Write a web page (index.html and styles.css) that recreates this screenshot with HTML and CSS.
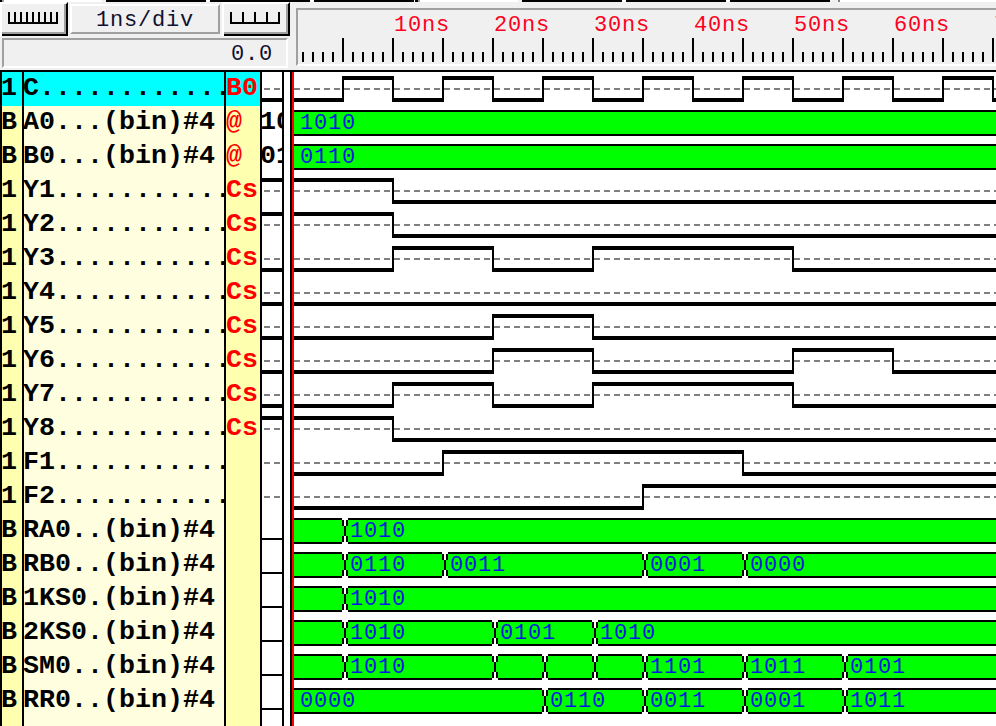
FILE: index.html
```html
<!DOCTYPE html>
<html lang="en">
<head>
<meta charset="utf-8">
<title>Waveforms</title>
<link rel="stylesheet" href="styles.css">
</head>
<body>
<svg class="defs" width="0" height="0" aria-hidden="true">
  <symbol id="cross" viewBox="0 0 6 26">
    <path fill="#fff" d="M0 0h6v2H0zM2 2h2v6H2zM2 18h2v6H2zM0 24h6v2H0z"/>
    <path fill="#000" d="M0 2h2v6H0zM4 2h2v6H4zM2 8h2v10H2zM0 18h2v6H0zM4 18h2v6H4z"/>
  </symbol>
</svg>
<div class="app">
  <div class="strip"></div>
  <header class="header">
    <div class="controls">
      <div class="buttons">
        <div class="btn"><svg width="50" height="12"><path d="M0 0h2v10h4V0h2v10h4V0h2v10h4V0h2v10h4V0h2v10h4V0h2v10h4V0h2v10h4V0h2v10h4V0h2v12H0z"/></svg></div>
        <div class="scale">1ns/div</div>
        <div class="btn"><svg width="50" height="12"><path d="M0 0h2v10h10V0h2v10h10V0h2v10h10V0h2v10h10V0h2v12H0z"/></svg></div>
      </div>
      <div class="position">0.0</div>
    </div>
    <div class="ruler">
      <div class="labels"><span>10ns</span><span>20ns</span><span>30ns</span><span>40ns</span><span>50ns</span><span>60ns</span><span>70ns</span></div>
      <div class="ticks"></div>
    </div>
  </header>
  <main class="signals">
    <div class="row selected"><b class="type">1</b><b class="name">C............</b><b class="src">B0</b><b class="val wave"><i class="lo"></i></b><div class="track wave"><i class="lo first n5"></i><i class="hi n5"></i><i class="lo n5"></i><i class="hi n5"></i><i class="lo n5"></i><i class="hi n5"></i><i class="lo n5"></i><i class="hi n5"></i><i class="lo n5"></i><i class="hi n5"></i><i class="lo n5"></i><i class="hi n5"></i><i class="lo n5"></i><i class="hi n5"></i><i class="lo rest"></i></div></div>
    <div class="row"><b class="type">B</b><b class="name">A0...(bin)#4</b><b class="src">@</b><b class="val">10</b><div class="track bus"><span class="rest first">1010</span></div></div>
    <div class="row"><b class="type">B</b><b class="name">B0...(bin)#4</b><b class="src">@</b><b class="val">01</b><div class="track bus"><span class="rest first">0110</span></div></div>
    <div class="row"><b class="type">1</b><b class="name">Y1...........</b><b class="src">Cs</b><b class="val wave"><i class="hi"></i></b><div class="track wave"><i class="hi first n10"></i><i class="lo rest"></i></div></div>
    <div class="row"><b class="type">1</b><b class="name">Y2...........</b><b class="src">Cs</b><b class="val wave"><i class="hi"></i></b><div class="track wave"><i class="hi first n10"></i><i class="lo rest"></i></div></div>
    <div class="row"><b class="type">1</b><b class="name">Y3...........</b><b class="src">Cs</b><b class="val wave"><i class="lo"></i></b><div class="track wave"><i class="lo first n10"></i><i class="hi n10"></i><i class="lo n10"></i><i class="hi n20"></i><i class="lo rest"></i></div></div>
    <div class="row"><b class="type">1</b><b class="name">Y4...........</b><b class="src">Cs</b><b class="val wave"><i class="lo"></i></b><div class="track wave"><i class="lo first rest"></i></div></div>
    <div class="row"><b class="type">1</b><b class="name">Y5...........</b><b class="src">Cs</b><b class="val wave"><i class="lo"></i></b><div class="track wave"><i class="lo first n20"></i><i class="hi n10"></i><i class="lo rest"></i></div></div>
    <div class="row"><b class="type">1</b><b class="name">Y6...........</b><b class="src">Cs</b><b class="val wave"><i class="lo"></i></b><div class="track wave"><i class="lo first n20"></i><i class="hi n10"></i><i class="lo n20"></i><i class="hi n10"></i><i class="lo rest"></i></div></div>
    <div class="row"><b class="type">1</b><b class="name">Y7...........</b><b class="src">Cs</b><b class="val wave"><i class="lo"></i></b><div class="track wave"><i class="lo first n10"></i><i class="hi n10"></i><i class="lo n10"></i><i class="hi n20"></i><i class="lo rest"></i></div></div>
    <div class="row"><b class="type">1</b><b class="name">Y8...........</b><b class="src">Cs</b><b class="val wave"><i class="hi"></i></b><div class="track wave"><i class="hi first n10"></i><i class="lo rest"></i></div></div>
    <div class="row"><b class="type">1</b><b class="name">F1...........</b><b class="src"></b><b class="val wave"></b><div class="track wave"><i class="lo first n15"></i><i class="hi n30"></i><i class="lo rest"></i></div></div>
    <div class="row"><b class="type">1</b><b class="name">F2...........</b><b class="src"></b><b class="val wave"></b><div class="track wave"><i class="lo first n35"></i><i class="hi rest"></i></div></div>
    <div class="row"><b class="type">B</b><b class="name">RA0..(bin)#4</b><b class="src"></b><b class="val none"></b><div class="track bus"><span class="first n5"></span><svg><use href="#cross"/></svg><span class="rest">1010</span></div></div>
    <div class="row"><b class="type">B</b><b class="name">RB0..(bin)#4</b><b class="src"></b><b class="val none"></b><div class="track bus"><span class="first n5"></span><svg><use href="#cross"/></svg><span class="n10">0110</span><svg><use href="#cross"/></svg><span class="n20">0011</span><svg><use href="#cross"/></svg><span class="n10">0001</span><svg><use href="#cross"/></svg><span class="rest">0000</span></div></div>
    <div class="row"><b class="type">B</b><b class="name">1KS0.(bin)#4</b><b class="src"></b><b class="val none"></b><div class="track bus"><span class="first n5"></span><svg><use href="#cross"/></svg><span class="rest">1010</span></div></div>
    <div class="row"><b class="type">B</b><b class="name">2KS0.(bin)#4</b><b class="src"></b><b class="val none"></b><div class="track bus"><span class="first n5"></span><svg><use href="#cross"/></svg><span class="n15">1010</span><svg><use href="#cross"/></svg><span class="n10">0101</span><svg><use href="#cross"/></svg><span class="rest">1010</span></div></div>
    <div class="row"><b class="type">B</b><b class="name">SM0..(bin)#4</b><b class="src"></b><b class="val none"></b><div class="track bus"><span class="first n5"></span><svg><use href="#cross"/></svg><span class="n15">1010</span><svg><use href="#cross"/></svg><span class="n5"></span><svg><use href="#cross"/></svg><span class="n5"></span><svg><use href="#cross"/></svg><span class="n5"></span><svg><use href="#cross"/></svg><span class="n10">1101</span><svg><use href="#cross"/></svg><span class="n10">1011</span><svg><use href="#cross"/></svg><span class="rest">0101</span></div></div>
    <div class="row"><b class="type">B</b><b class="name">RR0..(bin)#4</b><b class="src"></b><b class="val none"></b><div class="track bus"><span class="first n25">0000</span><svg><use href="#cross"/></svg><span class="n10">0110</span><svg><use href="#cross"/></svg><span class="n10">0011</span><svg><use href="#cross"/></svg><span class="n10">0001</span><svg><use href="#cross"/></svg><span class="rest">1011</span></div></div>
    <div class="row tail"><b class="type"></b><b class="name"></b><b class="src"></b><b class="val"></b><div class="track"></div></div>
  </main>
</div>
</body>
</html>
```

FILE: styles.css
```css
* { box-sizing: border-box; }

body {
  margin: 0;
  background: #fff;
  font-family: "Liberation Mono", monospace;
}

.defs { display: none; }

.app {
  width: 996px;
  height: 726px;
  overflow: hidden;
}

/* header */
.strip {
  height: 2px;
  background: linear-gradient(90deg,
    #000 0 2px, #a0a0a0 2px 4px, #fff 4px 102px, #f0f0f0 102px 106px,
    #000 106px 206px, #fff 206px 210px, #000 210px 310px, #fff 310px 314px,
    #000 314px 414px, #fff 414px 415px, #000 415px 418px, #a0a0a0 418px 420px,
    #fff 420px 518px, #f0f0f0 518px 522px, #000 522px 622px, #fff 622px 626px,
    #000 626px 726px, #fff 726px 730px, #000 730px 830px, #f0f0f0 830px 838px,
    #808080 838px 840px, #fff 840px);
}

.header {
  display: flex;
  height: 70px;
  background: #f0f0f0;
  border-bottom: 2px solid #000;
  font-size: 22px;
  letter-spacing: 0.8px;
}

.controls {
  flex: none;
  width: 296px;
  padding-left: 2px;
}

.buttons {
  display: flex;
  height: 34px;
  margin-bottom: 2px;
}

.btn {
  width: 66px;
  height: 34px;
  padding: 8px 0 0 6px;
  border-top: 2px solid #fff;
  border-right: 2px solid #000;
  border-bottom: 2px solid #000;
  box-shadow: inset -2px -2px #a0a0a0, -2px 0 #fff;
}

.btn svg { display: block; }

.scale {
  width: 150px;
  height: 30px;
  margin: 2px 4px 0 2px;
  padding-left: 24px;
  border: 2px solid #a0a0a0;
  border-top-color: #fff;
  border-left-color: #fff;
  color: #101030;
  line-height: 30px;
}

.position {
  width: 286px;
  height: 30px;
  padding-right: 13px;
  border: 2px solid #fff;
  border-top-color: #a0a0a0;
  border-left-color: #a0a0a0;
  color: #101030;
  line-height: 30px;
  text-align: right;
}

.ruler {
  flex: 1;
  min-width: 0;
  height: 58px;
  margin-top: 6px;
  border-top: 2px solid #a0a0a0;
  border-left: 2px solid #a0a0a0;
  border-bottom: 2px solid #fff;
  overflow: hidden;
}

.labels {
  display: flex;
  height: 28px;
  padding-left: 96px;
  color: #ff0020;
  line-height: 32px;
}

.labels span {
  flex: none;
  width: 100px;
}

.ticks {
  height: 24px;
  margin-left: 4px;
  background:
    repeating-linear-gradient(90deg, transparent 0 40px, #000 40px 42px, transparent 42px 50px) 0 0 / 100% 24px no-repeat,
    repeating-linear-gradient(90deg, #000 0 2px, transparent 2px 10px) 0 14px / 100% 10px no-repeat;
}

/* signal rows */
.row {
  display: flex;
  height: 34px;
  font-size: 26.67px;
  line-height: 32px;
}

.row > * {
  flex: none;
  white-space: pre;
}

.type {
  width: 24px;
  background: #ffffb0;
  border: solid #000;
  border-width: 0 2px;
  text-indent: -1px;
}

.name {
  width: 202px;
  background: #ffffe0;
  border-right: 2px solid #000;
  text-indent: -1px;
  clip-path: inset(0 0 0 -2px);
}

.src {
  width: 36px;
  background: #ffffb0;
  border-right: 2px solid #000;
  color: #f00;
}

.selected .type,
.selected .name,
.selected .src { background: #0ff; }

.val {
  width: 22px;
  border-right: 2px solid #000;
  overflow: hidden;
  text-indent: -2px;
}

.none { background: linear-gradient(#000, #000) 0 24px / 100% 2px no-repeat; }

.track {
  display: flex;
  width: 706px;
  margin-left: 6px;
  border-left: 2px solid #000;
  box-shadow: inset 2px 0 #f00;
  padding-left: 2px;
  overflow: hidden;
}

.wave {
  background: repeating-linear-gradient(90deg, #808080 0 6px, transparent 6px 10px) 2px 16px / 100% 2px no-repeat;
}

.val.wave { background-size: 16px 2px; }

.wave i {
  flex: none;
  height: 26px;
  margin-top: 4px;
  border-left: 2px solid #000;
}

.val.wave i {
  display: block;
  border-left: 0;
}

.wave .hi { border-top: 4px solid #000; }
.wave .lo { border-bottom: 4px solid #000; }
.wave .first { border-left: 0; }

/* time spans: 10px per nanosecond */
.n5 { --w: 50px; }
.n10 { --w: 100px; }
.n15 { --w: 150px; }
.n20 { --w: 200px; }
.n25 { --w: 250px; }
.n30 { --w: 300px; }
.n35 { --w: 350px; }

.track i { width: var(--w); }
.track i.first { width: calc(var(--w) - 2px); }

.bus span {
  flex: none;
  width: calc(var(--w) - 6px);
  height: 26px;
  margin-top: 4px;
  padding-left: 2px;
  background: #0f0;
  border: solid #000;
  border-width: 2px 0;
  color: #0018e0;
  font-size: 22px;
  letter-spacing: 0.8px;
  line-height: 24px;
}

.bus span.first {
  width: calc(var(--w) - 2px);
  padding-left: 6px;
}

.bus svg {
  flex: none;
  width: 6px;
  height: 26px;
  margin-top: 4px;
  background: #0f0;
}

.track .rest,
.track .rest.first {
  flex: 1;
  width: auto;
}

.tail { height: 8px; }
```
